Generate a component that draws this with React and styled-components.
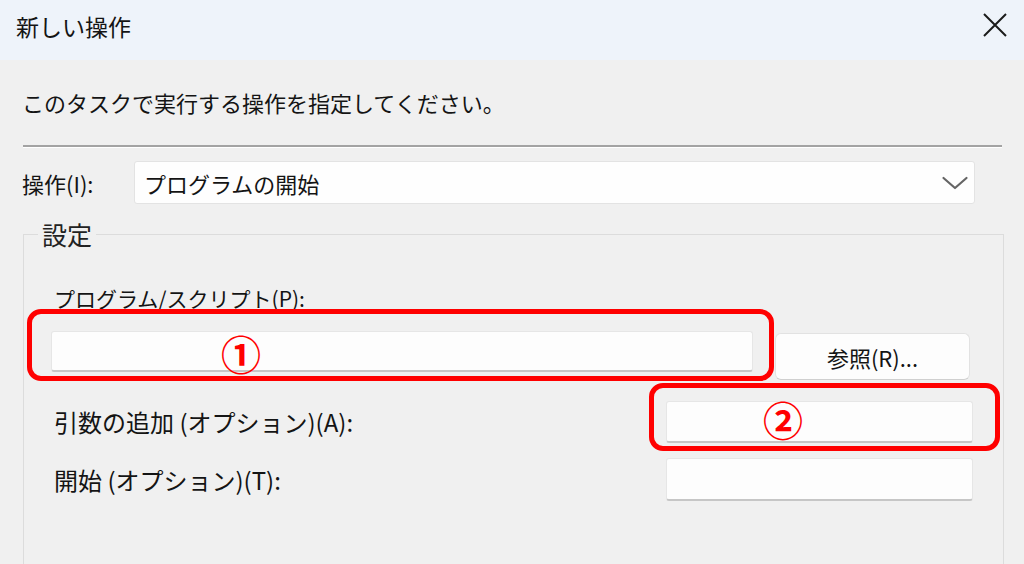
import React from 'react'
import styled, { createGlobalStyle } from 'styled-components'

const GlobalStyle = createGlobalStyle`
  html, body {
    margin: 0;
    padding: 0;
    background: #f0f0f0;
    overflow: hidden;
  }
  body {
    font-family: "Noto Sans CJK JP", "Noto Sans", sans-serif;
    color: #141414;
  }
`

const Window = styled.div`
  width: 1024px;
  height: 564px;
  overflow: hidden;
  background: #f0f0f0;
`

const TitleBar = styled.div`
  height: 60px;
  background: #eef3fa;
  display: flex;
  align-items: center;
  justify-content: space-between;
  padding: 0 15px 0 16px;
  box-sizing: border-box;
`

const Title = styled.div`
  font-size: 23px;
  line-height: 30px;
  margin-top: -9px;
`

const CloseButton = styled.button`
  border: 0;
  background: transparent;
  padding: 0;
  width: 28px;
  height: 28px;
  margin-top: -11px;
  display: flex;
  align-items: center;
  justify-content: center;
`

const Content = styled.div`
  padding: 0 20px 0 22px;
`

const Instruction = styled.p`
  margin: 27px 0 0;
  font-size: 22px;
  line-height: 30px;
`

const Separator = styled.hr`
  margin: 28px 0 0 1px;
  width: 979px;
  height: 2px;
  border: 0;
  background: #a3a3a3;
  box-shadow: 0 1px 0 #ffffff;
`

const ActionRow = styled.div`
  display: flex;
  align-items: center;
  margin-top: 14px;
`

const RowLabel = styled.span`
  width: 112px;
  flex: none;
  font-size: 22px;
  line-height: 30px;
`

const Select = styled.div`
  width: 841px;
  height: 43px;
  box-sizing: border-box;
  background: #fefefe;
  border: 1px solid #e3e3e3;
  border-radius: 3px;
  display: flex;
  align-items: center;
  justify-content: space-between;
  padding: 0 5px 0 9px;
  font-size: 22px;
`

const Group = styled.fieldset`
  margin: 15px 0 0 1px;
  padding: 0 30px 120px 27px;
  border: 1px solid #dcdcdc;
  border-radius: 0;
  min-width: 0;
`

const Legend = styled.legend`
  margin-left: -13px;
  padding: 0 4px;
  font-size: 25px;
  line-height: 30px;
  color: #222;
`

const FieldLabel = styled.div`
  font-size: ${({ $size }) => $size || 22}px;
  line-height: 30px;
  padding-left: 3px;
  margin-top: ${({ $top }) => $top || 0}px;
`

const ProgramRow = styled.div`
  display: flex;
  align-items: flex-start;
  margin-top: 18px;
`

const OptionRow = styled.div`
  display: flex;
  align-items: center;
  justify-content: space-between;
  margin-top: ${({ $top }) => $top}px;
`

const Annotated = styled.div`
  position: relative;
  flex: none;
`

const Input = styled.div`
  width: ${({ $width }) => $width}px;
  height: ${({ $height }) => $height}px;
  box-sizing: border-box;
  background: #fdfdfd;
  border: 1px solid #e6e6e6;
  border-bottom: 2px solid #c6c6c6;
  border-radius: 3px;
`

const Frame = styled.div`
  position: absolute;
  top: ${({ $t }) => $t}px;
  right: ${({ $r }) => $r}px;
  bottom: ${({ $b }) => $b}px;
  left: ${({ $l }) => $l}px;
  border: 5px solid #ff0000;
  border-radius: 14px;
  pointer-events: none;
`

const Mark = styled.span`
  position: absolute;
  left: ${({ $x }) => $x}px;
  top: ${({ $y }) => $y}px;
  transform: translate(-50%, -50%);
  font-size: 40px;
  font-weight: 700;
  line-height: 1;
  color: #ff0000;
`

const BrowseButton = styled.button`
  margin: 2px 3px 0 auto;
  width: 195px;
  height: 47px;
  box-sizing: border-box;
  background: #fdfdfd;
  border: 1px solid #e2e2e2;
  border-bottom-color: #d0d0d0;
  border-radius: 6px;
  font-family: inherit;
  font-size: 22px;
  color: #141414;
  padding: 0;
`

function Chevron() {
  return (
    <svg width="28" height="18" viewBox="0 0 28 18" fill="none">
      <path d="M2.5 4 L14 14 L25.5 4" stroke="#656565" strokeWidth="2.2" strokeLinecap="round" strokeLinejoin="round" />
    </svg>
  )
}

function CloseIcon() {
  return (
    <svg width="26" height="26" viewBox="0 0 26 26" fill="none">
      <path d="M2 2 L24 24 M24 2 L2 24" stroke="#1a1a1a" strokeWidth="2" />
    </svg>
  )
}

export default function App() {
  return (
    <Window>
      <GlobalStyle />
      <TitleBar>
        <Title>新しい操作</Title>
        <CloseButton aria-label="閉じる">
          <CloseIcon />
        </CloseButton>
      </TitleBar>
      <Content>
        <Instruction>このタスクで実行する操作を指定してください。</Instruction>
        <Separator />
        <ActionRow>
          <RowLabel>操作(I):</RowLabel>
          <Select>
            <span>プログラムの開始</span>
            <Chevron />
          </Select>
        </ActionRow>
        <Group>
          <Legend>設定</Legend>
          <FieldLabel $top={34} $size={21}>プログラム/スクリプト(P):</FieldLabel>
          <ProgramRow>
            <Annotated>
              <Input $width={702} $height={41} />
              <Frame $t={-22} $r={-21} $b={-9} $l={-24} />
              <Mark $x={190} $y={22}>①</Mark>
            </Annotated>
            <BrowseButton>参照(R)...</BrowseButton>
          </ProgramRow>
          <OptionRow $top={21}>
            <FieldLabel $size={24}>引数の追加 (オプション)(A):</FieldLabel>
            <Annotated>
              <Input $width={307} $height={42} />
              <Frame $t={-18} $r={-27} $b={-8} $l={-17} />
              <Mark $x={117} $y={18}>②</Mark>
            </Annotated>
          </OptionRow>
          <OptionRow $top={15}>
            <FieldLabel $size={24}>開始 (オプション)(T):</FieldLabel>
            <Input $width={307} $height={43} />
          </OptionRow>
        </Group>
      </Content>
    </Window>
  )
}
